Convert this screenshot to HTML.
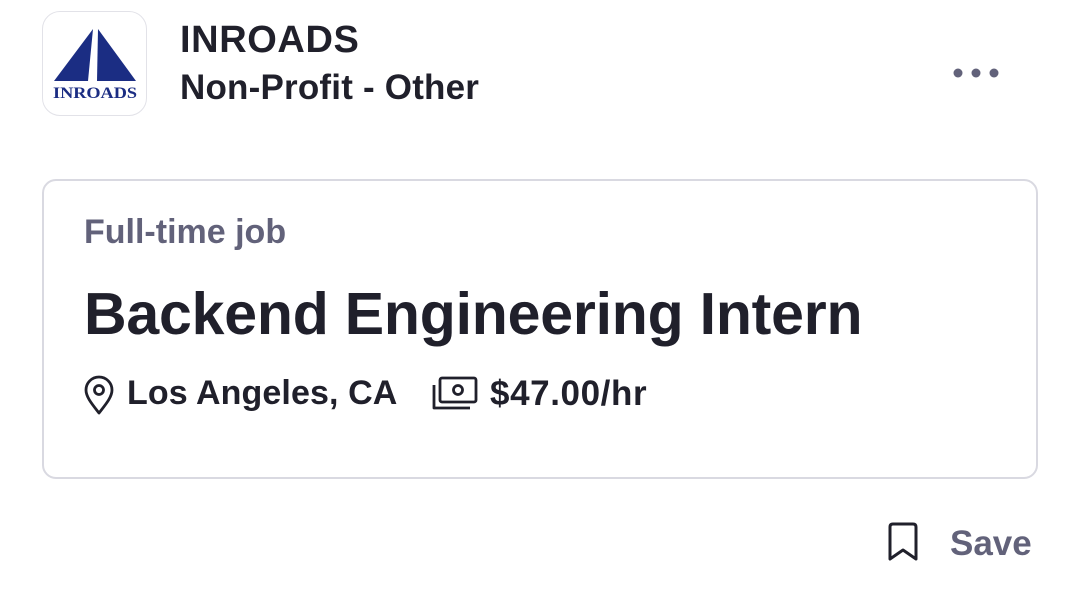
<!DOCTYPE html>
<html><head><meta charset="utf-8"><style>
*{margin:0;padding:0;box-sizing:border-box}
body{width:1080px;height:609px;background:#fff;font-family:"Liberation Sans",Arial,sans-serif;position:relative;overflow:hidden;color:#20202b}
.abs{position:absolute;white-space:nowrap}
.logo{position:absolute;left:42px;top:11px;width:105px;height:105px;border:1px solid #e2e2e8;border-radius:18px;background:#fff}
.card{position:absolute;left:42px;top:179px;width:996px;height:300px;border:2px solid #d9d9e1;border-radius:14px}
</style></head><body>
<div class="logo">
<svg width="105" height="105" viewBox="0 0 105 105">
<polygon points="11,69 50,17 45,69" fill="#1b2d83"/>
<polygon points="55,17 93,69 54,69" fill="#1b2d83"/>
<text x="52" y="86" text-anchor="middle" font-family="Liberation Serif,serif" font-weight="bold" font-size="16" fill="#1b2d83" textLength="84" lengthAdjust="spacingAndGlyphs">INROADS</text>
</svg></div>
<div class="abs" style="left:180px;top:19px;font-size:38px;font-weight:bold;letter-spacing:0.6px">INROADS</div>
<div class="abs" style="left:180px;top:68px;font-size:35px;font-weight:bold;letter-spacing:0.2px">Non-Profit - Other</div>
<svg class="abs" style="left:950px;top:66px" width="52" height="14"><circle cx="8" cy="7" r="4.5" fill="#62627a"/><circle cx="26" cy="7" r="4.5" fill="#62627a"/><circle cx="44" cy="7" r="4.5" fill="#62627a"/></svg>
<div class="card"></div>
<div class="abs" style="left:84px;top:213px;font-size:34px;font-weight:bold;color:#62627a">Full-time job</div>
<div class="abs" style="left:84px;top:280px;font-size:59px;font-weight:bold;letter-spacing:-0.2px">Backend Engineering Intern</div>
<svg class="abs" style="left:82px;top:374px" width="34" height="42" viewBox="0 0 34 42"><path d="M17 39 C10 30 4 23 4 16 A13 13 0 0 1 30 16 C30 23 24 30 17 39Z" fill="none" stroke="#20202b" stroke-width="2.8" stroke-linejoin="round"/><circle cx="17" cy="16" r="4.5" fill="none" stroke="#20202b" stroke-width="2.8"/></svg>
<div class="abs" style="left:127px;top:374px;font-size:34px;font-weight:bold;letter-spacing:0.1px">Los Angeles, CA</div>
<svg class="abs" style="left:431px;top:375px" width="48" height="38" viewBox="0 0 48 38"><rect x="9" y="3" width="36" height="24" rx="2" fill="none" stroke="#20202b" stroke-width="2.8"/><circle cx="27" cy="15" r="4.5" fill="none" stroke="#20202b" stroke-width="2.8"/><path d="M3 10 V33 H39" fill="none" stroke="#20202b" stroke-width="2.8" stroke-linejoin="round"/></svg>
<div class="abs" style="left:490px;top:374px;font-size:35px;font-weight:bold;letter-spacing:0.6px">$47.00/hr</div>
<svg class="abs" style="left:885px;top:521px" width="36" height="42" viewBox="0 0 36 42"><path d="M5 6 Q5 3 8 3 H28 Q31 3 31 6 V38 L18 29 L5 38Z" fill="none" stroke="#20202b" stroke-width="3" stroke-linejoin="round"/></svg>
<div class="abs" style="left:950px;top:524px;font-size:35px;font-weight:bold;color:#62627a">Save</div>
</body></html>
